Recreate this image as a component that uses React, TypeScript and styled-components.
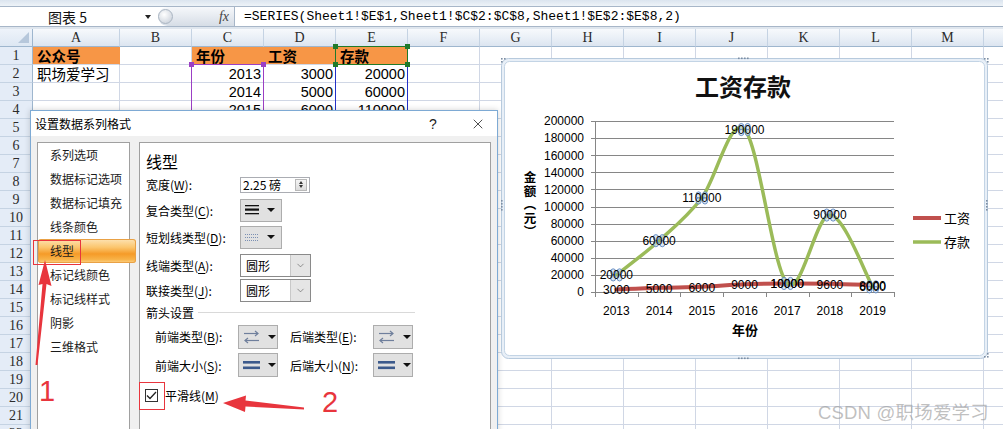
import React from 'react';
import styled, { createGlobalStyle } from 'styled-components';
import { X, ChevronDown } from 'lucide-react';

const CJK = '"Noto Sans CJK SC", sans-serif';
const RED = '#e8353d';
const ORANGE = '#f79646';

const GlobalStyle = createGlobalStyle`
  html, body {
    margin: 0;
    padding: 0;
    background: #ffffff;
  }
  body {
    font-family: "Liberation Sans", "Noto Sans CJK SC", sans-serif;
    overflow: hidden;
  }
`;

// ---------- data ----------
const COLS = ['A', 'B', 'C', 'D', 'E', 'F', 'G', 'H', 'I', 'J', 'K', 'L', 'M', 'N'];
const ROWS = Array.from({ length: 22 }, (_, i) => i + 1);

const YEARS = [2013, 2014, 2015, 2016, 2017, 2018, 2019];
const WAGES = [3000, 5000, 6000, 9000, 10000, 9600, 8000];
const SAVINGS = [20000, 60000, 110000, 190000, 10000, 90000, 6000];

type CellData = { v: string; bold?: boolean; fill?: boolean; right?: boolean };

const cells: Record<string, CellData> = {
  A1: { v: '公众号', bold: true, fill: true },
  C1: { v: '年份', bold: true, fill: true },
  D1: { v: '工资', bold: true, fill: true },
  E1: { v: '存款', bold: true, fill: true },
  A2: { v: '职场爱学习' },
};
YEARS.forEach((y, i) => {
  cells[`C${i + 2}`] = { v: String(y), right: true };
  cells[`D${i + 2}`] = { v: String(WAGES[i]), right: true };
  cells[`E${i + 2}`] = { v: String(SAVINGS[i]), right: true };
});

const NAV = ['系列选项', '数据标记选项', '数据标记填充', '线条颜色', '线型', '标记线颜色', '标记线样式', '阴影', '三维格式'];

// ---------- page ----------
const Page = styled.div`
  position: relative;
  width: 1003px;
  height: 429px;
  overflow: hidden;
  display: flex;
  flex-direction: column;
  background: #fff;
`;

const TopStrip = styled.div`
  flex: none;
  height: 6px;
  background: linear-gradient(#dbe4ef, #eef3f8);
`;

const FormulaBar = styled.div`
  flex: none;
  height: 21px;
  box-sizing: border-box;
  display: flex;
  border-top: 1px solid #a7b6c8;
  border-bottom: 1px solid #a7b6c8;
  background: #fff;
`;

const NameBox = styled.div`
  width: 155px;
  flex: none;
  display: flex;
  align-items: center;
  justify-content: space-between;
  padding: 0 4px 0 48px;
  box-sizing: border-box;
  font: 14px ${CJK};
  color: #111;
`;

const Caret = styled.span`
  width: 0;
  height: 0;
  border-left: 3.5px solid transparent;
  border-right: 3.5px solid transparent;
  border-top: 4px solid #222;
`;

const FxPill = styled.div`
  width: 76px;
  flex: none;
  margin-left: 3px;
  display: flex;
  align-items: center;
  padding-right: 5px;
  box-sizing: border-box;
  border-radius: 10px 0 0 10px;
  background: linear-gradient(#f6f8fb, #d6dde6);
`;

const Knob = styled.span`
  width: 15px;
  height: 15px;
  margin-right: auto;
  border-radius: 50%;
  box-sizing: border-box;
  border: 1px solid #aab5c2;
  background: radial-gradient(circle at 40% 35%, #ffffff, #c3cbd6);
`;

const Fx = styled.span`
  font: italic 14px "Liberation Serif", serif;
  color: #444;
`;

const FormulaInput = styled.div`
  flex: 1;
  border-left: 1px solid #a7b6c8;
  padding-left: 9px;
  font: 13px "Liberation Mono", monospace;
  line-height: 19px;
  white-space: nowrap;
  color: #000;
`;

const SheetGap = styled.div`
  flex: none;
  height: 2px;
  background: #dfe6ee;
`;

// ---------- sheet ----------
const Sheet = styled.div`
  position: relative;
  display: grid;
  grid-template-columns: 33px 87px repeat(13, 72px);
  grid-template-rows: repeat(23, 18px);
  font-family: "Liberation Sans", ${CJK};
`;

const Corner = styled.div`
  position: relative;
  box-sizing: border-box;
  background: linear-gradient(#eef3fa, #dde7f3);
  border-right: 1px solid #9eb6ce;
  border-bottom: 1px solid #9eb6ce;
  &::after {
    content: '';
    position: absolute;
    right: 3px;
    bottom: 3px;
    border-left: 11px solid transparent;
    border-bottom: 11px solid #b6c7db;
  }
`;

const ColHead = styled.div`
  display: flex;
  align-items: center;
  justify-content: center;
  box-sizing: border-box;
  background: linear-gradient(#f7f9fc 0%, #eaf0f7 50%, #dce5f0 100%);
  border-right: 1px solid #c5d3e3;
  border-bottom: 1px solid #9eb6ce;
  font: 14px "Liberation Serif", serif;
  color: #2b2b2b;
`;

const RowHead = styled.div`
  display: flex;
  align-items: center;
  justify-content: center;
  box-sizing: border-box;
  background: #e4ecf7;
  border-right: 1px solid #9eb6ce;
  border-bottom: 1px solid #c5d3e3;
  font: 14px "Liberation Serif", serif;
  color: #2b2b2b;
`;

const Cell = styled.div<{ $fill?: boolean; $bold?: boolean; $right?: boolean }>`
  display: flex;
  align-items: center;
  justify-content: ${(p) => (p.$right ? 'flex-end' : 'flex-start')};
  padding: 0 2px 0 4px;
  box-sizing: border-box;
  border-right: 1px solid ${(p) => (p.$fill ? ORANGE : '#d0d7e5')};
  border-bottom: 1px solid #d0d7e5;
  background: ${(p) => (p.$fill ? ORANGE : '#fff')};
  font-size: 14.5px;
  font-weight: ${(p) => (p.$bold ? 700 : 400)};
  white-space: nowrap;
  color: #000;
`;

// selection outline laid over a block of cells; the grid area is its containing block
const RangeBox = styled.div<{ $color: string; $handle: string; $cols: string; $rows: string }>`
  position: absolute;
  grid-column: ${(p) => p.$cols};
  grid-row: ${(p) => p.$rows};
  inset: -1px 0 0 -1px;
  border: 1px solid ${(p) => p.$color};
  pointer-events: none;
  &::before,
  &::after {
    content: '';
    position: absolute;
    top: -3px;
    width: 5px;
    height: 5px;
    background: ${(p) => p.$handle};
  }
  &::before {
    left: -3px;
  }
  &::after {
    right: -3px;
  }
`;

// ---------- dialog ----------
const Dialog = styled.div`
  position: absolute;
  left: 30px;
  top: 110px;
  width: 468px;
  height: 340px;
  box-sizing: border-box;
  border: 1px solid #7eaad4;
  background: #f0f0f0;
  display: flex;
  flex-direction: column;
  font-family: ${CJK};
  font-size: 12px;
  color: #000;
  box-shadow: 0 0 6px rgba(0, 0, 0, 0.18);
`;

const TitleBar = styled.div`
  flex: none;
  height: 25px;
  display: flex;
  align-items: center;
  padding-left: 4px;
  background: #fff;
`;

const TitleText = styled.div`
  flex: 1;
  font-size: 12px;
`;

const HelpBtn = styled.div`
  width: 30px;
  margin-right: 11px;
  text-align: center;
  font: 14px "Liberation Sans", sans-serif;
  color: #222;
`;

const CloseBtn = styled.div`
  width: 38px;
  display: flex;
  justify-content: center;
  color: #222;
`;

const DialogBody = styled.div`
  flex: 1;
  display: flex;
  gap: 9px;
  padding: 6px 6px 0;
`;

const Nav = styled.div`
  width: 93px;
  flex: none;
  box-sizing: border-box;
  background: #fff;
  border: 1px solid #a0a0a0;
  display: flex;
  flex-direction: column;
`;

const NavItem = styled.div<{ $active?: boolean }>`
  height: 24px;
  line-height: 24px;
  padding-left: 12px;
  white-space: nowrap;
  color: #1b1b1b;
  ${(p) =>
    p.$active &&
    `
    margin-right: -7px;
    border-radius: 3px;
    box-shadow: inset 0 0 0 1px #e9a145;
    background: linear-gradient(#fde3b4 0%, #fbc56d 35%, #f59b28 62%, #f8b247 85%, #fcd38a 100%);
  `}
`;

const Panel = styled.div`
  flex: 1;
  box-sizing: border-box;
  background: #fff;
  border: 1px solid #a0a0a0;
  padding-left: 6px;
  display: flex;
  flex-direction: column;
`;

const PanelHeading = styled.div`
  flex: none;
  margin-top: 7px;
  height: 22px;
  line-height: 22px;
  font-size: 16px;
`;

const FieldRow = styled.div<{ $h: number; $indent?: number; $top?: number }>`
  flex: none;
  display: flex;
  align-items: center;
  height: ${(p) => p.$h}px;
  padding-left: ${(p) => p.$indent || 0}px;
  margin-top: ${(p) => p.$top || 0}px;
`;

const Label = styled.div<{ $w: number }>`
  width: ${(p) => p.$w}px;
  flex: none;
  white-space: nowrap;
  u {
    text-decoration-thickness: 1px;
    text-underline-offset: 2px;
  }
`;

const SpinBox = styled.div`
  width: 70px;
  height: 16px;
  box-sizing: border-box;
  border: 1px solid #abadb3;
  display: flex;
  align-items: center;
  justify-content: space-between;
  padding-left: 2px;
  background: #fff;
`;

const SpinValue = styled.span`
  font-size: 12px;
  line-height: 14px;
  white-space: nowrap;
`;

const SpinBtn = styled.div`
  width: 12px;
  height: 12px;
  flex: none;
  margin-right: 2px;
  box-sizing: border-box;
  border: 1px solid #b8b8b8;
  background: linear-gradient(#f4f4f4, #dcdcdc);
  display: flex;
  flex-direction: column;
  align-items: center;
  justify-content: center;
  gap: 1px;
`;

const TinyTri = styled.span<{ $up?: boolean }>`
  width: 0;
  height: 0;
  border-left: 2.5px solid transparent;
  border-right: 2.5px solid transparent;
  ${(p) => (p.$up ? 'border-bottom: 3px solid #333;' : 'border-top: 3px solid #333;')}
`;

const DropBtn = styled.div<{ $w: number; $h: number }>`
  width: ${(p) => p.$w}px;
  height: ${(p) => p.$h}px;
  box-sizing: border-box;
  border: 1px solid #adadad;
  background: #e1e1e1;
  display: flex;
  align-items: center;
  padding-left: 4px;
  gap: 8px;
`;

const BtnCaret = styled.span`
  width: 0;
  height: 0;
  border-left: 4px solid transparent;
  border-right: 4px solid transparent;
  border-top: 4px solid #111;
`;

const Select = styled.div`
  width: 71px;
  height: 23px;
  box-sizing: border-box;
  border: 1px solid #8a8a8a;
  background: #fff;
  display: flex;
  align-items: stretch;
`;

const SelectValue = styled.div`
  flex: 1;
  display: flex;
  align-items: center;
  padding-left: 5px;
  font-size: 12px;
`;

const SelectArrow = styled.div`
  width: 19px;
  background: #e5e5e5;
  border-left: 1px solid #c8c8c8;
  display: flex;
  align-items: center;
  justify-content: center;
  color: #555;
`;

const SectionTitle = styled.div`
  flex: none;
  height: 20px;
  display: flex;
  align-items: center;
  gap: 4px;
  margin-right: 75px;
  &::after {
    content: '';
    flex: 1;
    border-top: 1px solid #d9d9d9;
  }
`;

const Gap = styled.div<{ $w: number }>`
  width: ${(p) => p.$w}px;
  flex: none;
`;

const CheckBox = styled.div`
  width: 13px;
  height: 13px;
  margin: 0 7px 0 -1px;
  box-sizing: border-box;
  border: 1px solid #333;
  background: #fff;
  display: flex;
  align-items: center;
  justify-content: center;
`;

// ---------- annotations ----------
const RedFrame = styled.div<{ $x: number; $y: number; $w: number; $h: number }>`
  position: absolute;
  left: ${(p) => p.$x}px;
  top: ${(p) => p.$y}px;
  width: ${(p) => p.$w}px;
  height: ${(p) => p.$h}px;
  box-sizing: border-box;
  border: 1px solid ${RED};
  pointer-events: none;
`;

const StepNumber = styled.div<{ $x: number; $y: number }>`
  position: absolute;
  left: ${(p) => p.$x}px;
  top: ${(p) => p.$y}px;
  font: 29px "Liberation Sans", sans-serif;
  line-height: 29px;
  color: ${RED};
`;

const ArrowMark = styled.svg<{ $x: number; $y: number }>`
  position: absolute;
  left: ${(p) => p.$x}px;
  top: ${(p) => p.$y}px;
  overflow: visible;
`;

const Watermark = styled.div`
  position: absolute;
  right: 14px;
  top: 398px;
  font: 18.5px "Liberation Sans", ${CJK};
  color: rgba(150, 150, 150, 0.6);
  white-space: nowrap;
  letter-spacing: 0.2px;
`;

// ---------- chart ----------
const ChartObject = styled.div`
  position: absolute;
  left: 500px;
  top: 57px;
  width: 489px;
  height: 303px;
  svg {
    display: block;
  }
`;

type Pt = [number, number];
const PLOT = { x0: 595, x1: 894, y0: 292, y1: 121 };
const CAT = (PLOT.x1 - PLOT.x0) / 7;
const px = (i: number) => PLOT.x0 + CAT * (i + 0.5);
const py = (v: number) => PLOT.y0 - (v / 200000) * (PLOT.y0 - PLOT.y1);
const crisp = (v: number) => Math.round(v) + 0.5;

const smoothPath = (pts: Pt[]) => {
  let d = `M${pts[0][0]},${pts[0][1]}`;
  for (let i = 0; i < pts.length - 1; i++) {
    const p0 = pts[i - 1] || pts[i];
    const p1 = pts[i];
    const p2 = pts[i + 1];
    const p3 = pts[i + 2] || p2;
    const c1x = p1[0] + (p2[0] - p0[0]) / 6;
    const c1y = p1[1] + (p2[1] - p0[1]) / 6;
    const c2x = p2[0] - (p3[0] - p1[0]) / 6;
    const c2y = p2[1] - (p3[1] - p1[1]) / 6;
    d += ` C${c1x},${c1y} ${c2x},${c2y} ${p2[0]},${p2[1]}`;
  }
  return d;
};

const Dots = ({ x, y, vertical }: { x: number; y: number; vertical?: boolean }) => (
  <g fill="#7c8ea3">
    {[0, 1, 2, 3].map((k) => (
      <rect key={k} x={vertical ? x : x + k * 3} y={vertical ? y + k * 3 : y} width="1.6" height="1.6" />
    ))}
  </g>
);

const SalaryChart = () => {
  const wagePts: Pt[] = WAGES.map((v, i) => [px(i), py(v)]);
  const savePts: Pt[] = SAVINGS.map((v, i) => [px(i), py(v)]);
  const grid = Array.from({ length: 11 }, (_, k) => k);
  const ticksX = Array.from({ length: 8 }, (_, i) => crisp(PLOT.x0 + CAT * i));
  const labelFont = '"Liberation Sans", sans-serif';

  return (
    <ChartObject>
      <svg width="489" height="303" viewBox="500 57 489 303">
        <rect x="501.5" y="58.5" width="486" height="300" rx="7" fill="#e8eff7" stroke="#b7cadd" />
        <rect x="504.5" y="61.5" width="480" height="294" rx="5" fill="#fff" stroke="#c3d4e5" />
        <Dots x={738} y={57.5} />
        <Dots x={738} y={357.5} />
        <Dots x={986} y={200} vertical />
        <Dots x={501} y={200} vertical />
        <g fill="#7c8ea3">
          <rect x="984" y="58" width="1.6" height="1.6" />
          <rect x="987" y="58" width="1.6" height="1.6" />
          <rect x="987" y="61" width="1.6" height="1.6" />
          <rect x="984" y="356" width="1.6" height="1.6" />
          <rect x="987" y="356" width="1.6" height="1.6" />
          <rect x="987" y="353" width="1.6" height="1.6" />
          <rect x="501" y="58" width="1.6" height="1.6" />
          <rect x="504" y="58" width="1.6" height="1.6" />
          <rect x="501" y="61" width="1.6" height="1.6" />
        </g>

        <text x="743" y="96" textAnchor="middle" fontSize="24" fontWeight="700" fontFamily={CJK} fill="#111">
          工资存款
        </text>

        {grid.map((k) => {
          const y = crisp(py(k * 20000));
          return (
            <g key={k}>
              {k > 0 && <line x1={PLOT.x0} x2={PLOT.x1} y1={y} y2={y} stroke="#868686" />}
              <line x1={PLOT.x0 - 4} x2={PLOT.x0} y1={y} y2={y} stroke="#868686" />
              <text x="584" y={py(k * 20000) + 4.3} textAnchor="end" fontSize="12" fontFamily={labelFont} fill="#000">
                {k * 20000}
              </text>
            </g>
          );
        })}
        <line x1={crisp(PLOT.x0)} x2={crisp(PLOT.x0)} y1={PLOT.y1} y2={PLOT.y0} stroke="#868686" />
        <line x1={PLOT.x0} x2={PLOT.x1} y1={crisp(PLOT.y0)} y2={crisp(PLOT.y0)} stroke="#868686" />
        {ticksX.map((x) => (
          <line key={x} x1={x} x2={x} y1={PLOT.y0} y2={PLOT.y0 + 5} stroke="#868686" />
        ))}
        {YEARS.map((y, i) => (
          <text key={y} x={px(i)} y="314.5" textAnchor="middle" fontSize="12" fontFamily={labelFont} fill="#000">
            {y}
          </text>
        ))}
        <text x="745" y="334.5" textAnchor="middle" fontSize="13" fontWeight="700" fontFamily={CJK} fill="#000">
          年份
        </text>
        <text
          x="530"
          y="171"
          fontSize="12.5"
          fontWeight="700"
          fontFamily={CJK}
          fill="#000"
          letterSpacing="1"
          style={{ writingMode: 'vertical-rl' }}
        >
          金额（元）
        </text>

        <path d={smoothPath(wagePts)} fill="none" stroke="#c0504d" strokeWidth="4" strokeLinecap="round" />
        <path d={smoothPath(savePts)} fill="none" stroke="#9bbb59" strokeWidth="3.5" strokeLinecap="round" />

        {savePts.map(([x, y], i) => (
          <g key={i} fill="#c9dcf0" fillOpacity="0.7" stroke="#5f88bf" strokeWidth="0.9">
            <ellipse cx={x - 3.2} cy={y - 3} rx="2.6" ry="3.1" />
            <ellipse cx={x + 3.2} cy={y - 3} rx="2.6" ry="3.1" />
            <ellipse cx={x - 3.2} cy={y + 3} rx="2.6" ry="3.1" />
            <ellipse cx={x + 3.2} cy={y + 3} rx="2.6" ry="3.1" />
          </g>
        ))}

        <g fontSize="12" fontFamily={labelFont} fill="#000" textAnchor="middle">
          {wagePts.map(([x, y], i) => (
            <text key={`w${i}`} x={x} y={y + 4.8}>
              {WAGES[i]}
            </text>
          ))}
          {savePts.map(([x, y], i) => (
            <text key={`s${i}`} x={x} y={y + 4.3}>
              {SAVINGS[i]}
            </text>
          ))}
        </g>

        <line x1="913" x2="941" y1="218" y2="218" stroke="#c0504d" strokeWidth="4" />
        <text x="944" y="222.5" fontSize="13" fontFamily={CJK} fill="#000">
          工资
        </text>
        <line x1="913" x2="941" y1="242" y2="242" stroke="#9bbb59" strokeWidth="3.5" />
        <text x="944" y="246.5" fontSize="13" fontFamily={CJK} fill="#000">
          存款
        </text>
      </svg>
    </ChartObject>
  );
};

// ---------- small icons ----------
const CompoundIcon = () => (
  <svg width="14" height="10" viewBox="0 0 14 10">
    <rect x="0" y="0" width="14" height="1.3" fill="#111" />
    <rect x="0" y="3.5" width="14" height="2.2" fill="#111" />
    <rect x="0" y="8" width="14" height="1.3" fill="#111" />
  </svg>
);

const DashIcon = () => (
  <svg width="14" height="9" viewBox="0 0 14 9">
    <g stroke="#7a8fb3" strokeWidth="1" strokeDasharray="1 1">
      <line x1="0" x2="14" y1="1.5" y2="1.5" />
      <line x1="0" x2="14" y1="4.5" y2="4.5" />
      <line x1="0" x2="14" y1="7.5" y2="7.5" />
    </g>
  </svg>
);

const ArrowTypeIcon = () => (
  <svg width="17" height="14" viewBox="0 0 17 14">
    <g stroke="#6f7f9c" strokeWidth="1.2" fill="none">
      <line x1="1" x2="15" y1="3.5" y2="3.5" />
      <polyline points="12,1 15,3.5 12,6" />
      <line x1="2" x2="16" y1="10.5" y2="10.5" />
      <polyline points="5,8 2,10.5 5,13" />
    </g>
  </svg>
);

const ArrowSizeIcon = () => (
  <svg width="17" height="9" viewBox="0 0 17 9">
    <rect x="0" y="0" width="17" height="2.6" fill="#3c5a8c" />
    <rect x="0" y="5.5" width="17" height="2.6" fill="#3c5a8c" />
  </svg>
);

const CheckMark = () => (
  <svg width="11" height="9" viewBox="0 0 11 9">
    <polyline points="1,4.5 4,7.5 10,1" fill="none" stroke="#222" strokeWidth="1.3" />
  </svg>
);

// ---------- app ----------
const App = () => {
  return (
    <>
      <GlobalStyle />
      <Page>
        <TopStrip />
        <FormulaBar>
          <NameBox>
            图表 5
            <Caret />
          </NameBox>
          <FxPill>
            <Knob />
            <Fx>fx</Fx>
          </FxPill>
          <FormulaInput>=SERIES(Sheet1!$E$1,Sheet1!$C$2:$C$8,Sheet1!$E$2:$E$8,2)</FormulaInput>
        </FormulaBar>
        <SheetGap />

        <Sheet>
          <Corner />
          {COLS.map((c) => (
            <ColHead key={c}>{c}</ColHead>
          ))}
          {ROWS.map((r) => (
            <React.Fragment key={r}>
              <RowHead>{r}</RowHead>
              {COLS.map((c) => {
                const d = cells[`${c}${r}`];
                return (
                  <Cell key={c} $fill={d?.fill} $bold={d?.bold} $right={d?.right}>
                    {d?.v}
                  </Cell>
                );
              })}
            </React.Fragment>
          ))}
          <RangeBox $color="#9b3fc4" $handle="#9b3fc4" $cols="4 / 5" $rows="3 / 10" />
          <RangeBox $color="#2431c8" $handle="#1f7a2a" $cols="6 / 7" $rows="3 / 10" />
          <RangeBox $color="#1f7a2a" $handle="#1f7a2a" $cols="6 / 7" $rows="2 / 3" />
        </Sheet>

        <Dialog>
          <TitleBar>
            <TitleText>设置数据系列格式</TitleText>
            <HelpBtn>?</HelpBtn>
            <CloseBtn>
              <X size={16} strokeWidth={1.2} />
            </CloseBtn>
          </TitleBar>
          <DialogBody>
            <Nav>
              {NAV.map((n) => (
                <NavItem key={n} $active={n === '线型'}>
                  {n}
                </NavItem>
              ))}
            </Nav>
            <Panel>
              <PanelHeading>线型</PanelHeading>
              <FieldRow $h={25}>
                <Label $w={94}>
                  宽度(<u>W</u>):
                </Label>
                <SpinBox>
                  <SpinValue>2.25 磅</SpinValue>
                  <SpinBtn>
                    <TinyTri $up />
                    <TinyTri />
                  </SpinBtn>
                </SpinBox>
              </FieldRow>
              <FieldRow $h={26}>
                <Label $w={94}>
                  复合类型(<u>C</u>):
                </Label>
                <DropBtn $w={42} $h={23}>
                  <CompoundIcon />
                  <BtnCaret />
                </DropBtn>
              </FieldRow>
              <FieldRow $h={28}>
                <Label $w={94}>
                  短划线类型(<u>D</u>):
                </Label>
                <DropBtn $w={42} $h={23}>
                  <DashIcon />
                  <BtnCaret />
                </DropBtn>
              </FieldRow>
              <FieldRow $h={28}>
                <Label $w={94}>
                  线端类型(<u>A</u>):
                </Label>
                <Select>
                  <SelectValue>圆形</SelectValue>
                  <SelectArrow>
                    <ChevronDown size={11} strokeWidth={1.3} />
                  </SelectArrow>
                </Select>
              </FieldRow>
              <FieldRow $h={23}>
                <Label $w={94}>
                  联接类型(<u>J</u>):
                </Label>
                <Select>
                  <SelectValue>圆形</SelectValue>
                  <SelectArrow>
                    <ChevronDown size={11} strokeWidth={1.3} />
                  </SelectArrow>
                </Select>
              </FieldRow>
              <SectionTitle>箭头设置</SectionTitle>
              <FieldRow $h={29} $indent={9}>
                <Label $w={83}>
                  前端类型(<u>B</u>):
                </Label>
                <DropBtn $w={40} $h={24}>
                  <ArrowTypeIcon />
                  <BtnCaret />
                </DropBtn>
                <Gap $w={12} />
                <Label $w={83}>
                  后端类型(<u>E</u>):
                </Label>
                <DropBtn $w={40} $h={24}>
                  <ArrowTypeIcon />
                  <BtnCaret />
                </DropBtn>
              </FieldRow>
              <FieldRow $h={28} $indent={9}>
                <Label $w={83}>
                  前端大小(<u>S</u>):
                </Label>
                <DropBtn $w={40} $h={24}>
                  <ArrowSizeIcon />
                  <BtnCaret />
                </DropBtn>
                <Gap $w={12} />
                <Label $w={83}>
                  后端大小(<u>N</u>):
                </Label>
                <DropBtn $w={40} $h={24}>
                  <ArrowSizeIcon />
                  <BtnCaret />
                </DropBtn>
              </FieldRow>
              <FieldRow $h={26} $top={3}>
                <CheckBox>
                  <CheckMark />
                </CheckBox>
                <Label $w={80}>
                  平滑线(<u>M</u>)
                </Label>
              </FieldRow>
            </Panel>
          </DialogBody>
        </Dialog>

        <SalaryChart />

        <RedFrame $x={33} $y={240} $w={48} $h={25} />
        <RedFrame $x={139} $y={382} $w={26} $h={28} />
        <ArrowMark $x={28} $y={255} width="30" height="115" viewBox="28 255 30 115">
          <polygon
            points="45,260 51.5,286 46.5,284 37.5,365 35.5,365 42.5,284 38.5,285"
            fill={RED}
          />
        </ArrowMark>
        <ArrowMark $x={220} $y={392} width="90" height="24" viewBox="220 392 90 24">
          <polygon points="223,403 246,395.5 245.5,400.5 304,407.5 304,409.5 245.5,406.5 245,412" fill={RED} />
        </ArrowMark>
        <StepNumber $x={39} $y={377}>1</StepNumber>
        <StepNumber $x={322} $y={388}>2</StepNumber>
        <Watermark>CSDN @职场爱学习</Watermark>
      </Page>
    </>
  );
};

export default App;
